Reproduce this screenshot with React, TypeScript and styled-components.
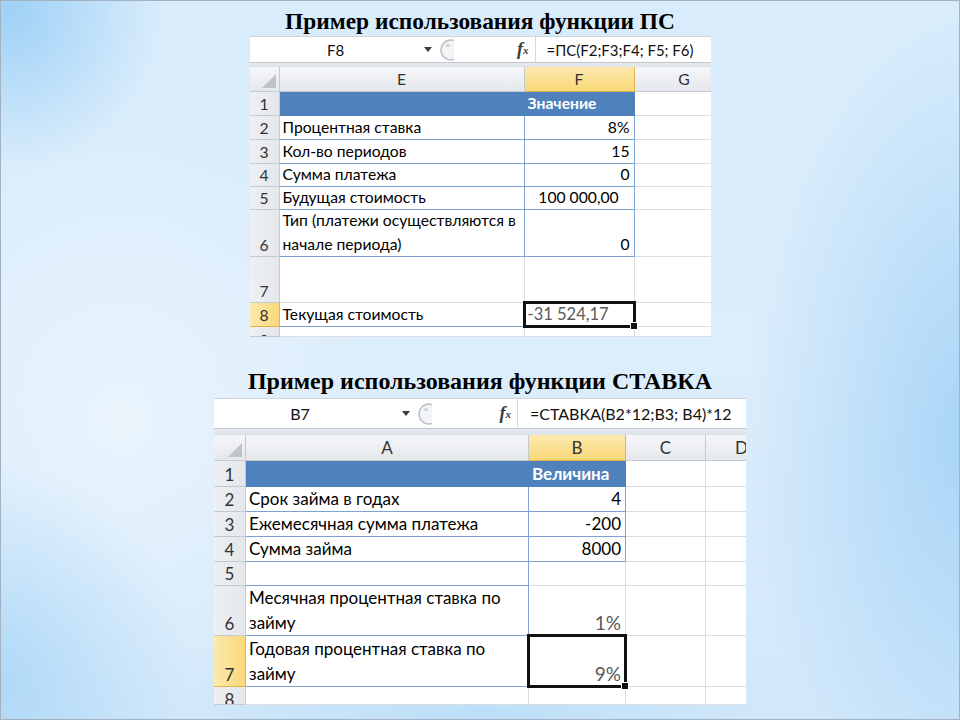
import React from 'react';
import styled, { createGlobalStyle, css } from 'styled-components';

const GlobalStyle = createGlobalStyle`
  html, body { margin: 0; padding: 0; }
  body { width: 960px; height: 720px; overflow: hidden; font-family: "Liberation Serif", serif; }
`;

const Slide = styled.div`
  width: 960px;
  height: 720px;
  box-sizing: border-box;
  border: 1px solid #a3b2c0;
  display: flex;
  flex-direction: column;
  align-items: center;
  background:
    radial-gradient(150px 160px at 10px 10px, rgba(140, 200, 245, 0.75), rgba(140, 200, 245, 0)),
    radial-gradient(230px 420px at 975px 430px, rgba(145, 202, 245, 0.7), rgba(145, 202, 245, 0)),
    radial-gradient(200px 220px at -10px 680px, rgba(150, 205, 245, 0.6), rgba(150, 205, 245, 0)),
    radial-gradient(300px 200px at 480px 730px, rgba(160, 210, 246, 0.45), rgba(160, 210, 246, 0)),
    radial-gradient(260px 300px at 120px 420px, rgba(235, 245, 253, 0.9), rgba(235, 245, 253, 0)),
    linear-gradient(180deg, #d8ecfb 0%, #dcedfb 50%, #d2e8fa 100%);
`;

const Title = styled.h1<{ $mt: number; $mb: number; $fs: number }>`
  margin: ${(p) => p.$mt}px 0 ${(p) => p.$mb}px;
  font-family: "Liberation Serif", "Times New Roman", serif;
  font-weight: bold;
  font-size: ${(p) => p.$fs}px;
  line-height: 26px;
  color: #000;
  white-space: nowrap;
`;

/* ---------- spreadsheet ---------- */

const SheetFrame = styled.div<{ $w: number; $fs: number }>`
  width: ${(p) => p.$w}px;
  overflow: hidden;
  background: #fff;
  font-family: "Lato", "Open Sans", sans-serif;
  font-size: ${(p) => p.$fs}px;
  color: #000;
`;

const FormulaBar = styled.div<{ $h: number; $fs: number }>`
  height: ${(p) => p.$h}px;
  box-sizing: border-box;
  display: flex;
  align-items: center;
  background: #fff;
  border-top: 1px solid #cfd4da;
  border-bottom: 1px solid #bfc6ce;
  white-space: nowrap;
  font-size: ${(p) => p.$fs}px;
`;

const NameText = styled.div`
  flex: none;
  width: 172px;
  text-align: center;
  color: #111;
`;

const ArrowBox = styled.div<{ $ml: number }>`
  flex: none;
  margin-left: ${(p) => p.$ml}px;
  width: 12px;
  display: flex;
  justify-content: center;
  align-items: center;
`;

const GripBox = styled.div`
  flex: none;
  width: 24px;
  display: flex;
  justify-content: flex-start;
  align-items: center;
`;

const FxCell = styled.div<{ $w: number }>`
  flex: none;
  width: ${(p) => p.$w}px;
  align-self: stretch;
  box-sizing: border-box;
  display: flex;
  align-items: center;
  justify-content: flex-end;
  padding-right: 6px;
  border-right: 1px solid #d3d8de;
  font: italic bold 18px "Liberation Serif", serif;
  color: #3a3a3a;
  & sub {
    font-size: 11px;
    font-style: italic;
    vertical-align: -2px;
  }
`;

const FormulaText = styled.div<{ $pl: number }>`
  padding-left: ${(p) => p.$pl}px;
  color: #111;
`;

const BarGap = styled.div<{ $h: number }>`
  height: ${(p) => p.$h}px;
  background: linear-gradient(#e6eaef, #dde2e8);
`;

const Grid = styled.div<{ $cols: string; $rows: string }>`
  display: grid;
  grid-template-columns: ${(p) => p.$cols};
  grid-template-rows: ${(p) => p.$rows};
`;

const headBg = (sel?: boolean) =>
  sel ? 'linear-gradient(#fde9ad, #f9d879)' : 'linear-gradient(#f5f6f8, #e5e8ec)';
const headLine = (sel?: boolean) => (sel ? '#e2b54c' : '#c5cad0');

const ColHead = styled.div<{ $sel?: boolean }>`
  display: flex;
  align-items: center;
  justify-content: center;
  background: ${(p) => headBg(p.$sel)};
  border-right: 1px solid ${(p) => headLine(p.$sel)};
  border-bottom: 1px solid ${(p) => headLine(p.$sel)};
  color: #333;
  overflow: hidden;
`;

const Corner = styled.div`
  display: flex;
  align-items: flex-end;
  justify-content: flex-end;
  padding: 0 3px 3px 0;
  background: linear-gradient(#f5f6f8, #e5e8ec);
  border-right: 1px solid #c5cad0;
  border-bottom: 1px solid #c5cad0;
`;

const RowHead = styled.div<{ $sel?: boolean; $clip?: boolean }>`
  display: flex;
  justify-content: center;
  align-items: ${(p) => (p.$clip ? 'flex-start' : 'flex-end')};
  padding: ${(p) => (p.$clip ? '2px 0 0' : '0')};
  line-height: 22px;
  background: ${(p) => (p.$sel ? 'linear-gradient(90deg, #fde9ad, #f9d879)' : 'linear-gradient(90deg, #eef0f3, #e4e7eb)')};
  border-right: 1px solid ${(p) => headLine(p.$sel)};
  border-bottom: 1px solid ${(p) => headLine(p.$sel)};
  color: #333;
  overflow: hidden;
`;

type Edge = 'blue' | 'grid' | 'fill';
const edgeColor: Record<Edge, string> = {
  blue: '#7ea2d2',
  grid: '#dadde1',
  fill: '#4f81bd',
};

const Cell = styled.div<{
  $align: 'left' | 'right' | 'center';
  $fill?: boolean;
  $bold?: boolean;
  $r: Edge;
  $b: Edge;
  $sel?: boolean;
  $big?: boolean;
  $bigSize: number;
  $lh: number;
}>`
  position: relative;
  display: flex;
  align-items: flex-end;
  justify-content: ${(p) => (p.$align === 'left' ? 'flex-start' : p.$align === 'right' ? 'flex-end' : 'center')};
  padding: 0 4px 0 3px;
  white-space: pre;
  line-height: ${(p) => p.$lh}px;
  background: ${(p) => (p.$fill ? '#4f81bd' : '#fff')};
  color: ${(p) => (p.$fill ? '#fff' : p.$big ? '#5a5a5a' : '#000')};
  font-weight: ${(p) => (p.$bold ? 700 : 400)};
  font-size: ${(p) => (p.$big ? `${p.$bigSize}px` : '1em')};
  border-right: 1px solid ${(p) => edgeColor[p.$r]};
  border-bottom: 1px solid ${(p) => edgeColor[p.$b]};
  ${(p) =>
    p.$sel &&
    css`
      z-index: 1;
      &::after {
        content: '';
        position: absolute;
        inset: -2px -2px -2px -2px;
        border: 3px solid #111;
        pointer-events: none;
      }
      &::before {
        content: '';
        position: absolute;
        right: -4px;
        bottom: -4px;
        width: 6px;
        height: 6px;
        background: #111;
        border: 1px solid #fff;
        z-index: 2;
      }
    `}
`;

type CellSpec = {
  text?: string;
  align?: 'left' | 'right' | 'center';
  fill?: boolean;
  bold?: boolean;
  r?: Edge;
  b?: Edge;
  sel?: boolean;
  big?: boolean;
};

type RowSpec = { num: string; h: number; sel?: boolean; clip?: boolean; cells: CellSpec[] };
type ColSpec = { label: string; w: number; sel?: boolean };

type SheetProps = {
  width: number;
  fontSize: number;
  barFont: number;
  bigSize: number;
  lineHeight: number;
  barHeight: number;
  gapHeight: number;
  headHeight: number;
  rowHeadWidth: number;
  nameBox: string;
  arrowMargin: number;
  fxWidth: number;
  formulaPad: number;
  formula: string;
  cols: ColSpec[];
  rows: RowSpec[];
};

const DropArrow = () => (
  <svg width="8" height="5" viewBox="0 0 8 5">
    <polygon points="0,0 8,0 4,5" fill="#3c3c3c" />
  </svg>
);

const Grip = () => (
  <svg width="20" height="24" viewBox="0 0 20 24">
    <circle cx="17" cy="12" r="10" fill="#f3f4f6" stroke="#b9c0c8" strokeWidth="1.5" />
    <ellipse cx="14" cy="7.5" rx="2.6" ry="1.6" fill="#d2d7dd" />
  </svg>
);

const CornerMark = () => (
  <svg width="14" height="14" viewBox="0 0 14 14">
    <polygon points="14,0 14,14 0,14" fill="#bfc4ca" />
  </svg>
);

const Sheet: React.FC<SheetProps> = (p) => {
  const cols = `${p.rowHeadWidth}px ${p.cols.map((c) => `${c.w}px`).join(' ')}`;
  const rows = `${p.headHeight}px ${p.rows.map((r) => `${r.h}px`).join(' ')}`;
  return (
    <SheetFrame $w={p.width} $fs={p.fontSize}>
      <FormulaBar $h={p.barHeight} $fs={p.barFont}>
        <NameText>{p.nameBox}</NameText>
        <ArrowBox $ml={p.arrowMargin}>
          <DropArrow />
        </ArrowBox>
        <GripBox>
          <Grip />
        </GripBox>
        <FxCell $w={p.fxWidth}>
          f<sub>x</sub>
        </FxCell>
        <FormulaText $pl={p.formulaPad}>{p.formula}</FormulaText>
      </FormulaBar>
      <BarGap $h={p.gapHeight} />
      <Grid $cols={cols} $rows={rows}>
        <Corner>
          <CornerMark />
        </Corner>
        {p.cols.map((c) => (
          <ColHead key={c.label} $sel={c.sel}>
            {c.label}
          </ColHead>
        ))}
        {p.rows.map((r) => (
          <React.Fragment key={r.num}>
            <RowHead $sel={r.sel} $clip={r.clip}>
              {r.num}
            </RowHead>
            {p.cols.map((c, i) => {
              const s = r.cells[i] || {};
              return (
                <Cell
                  key={c.label}
                  $align={s.align || 'left'}
                  $fill={s.fill}
                  $bold={s.bold}
                  $r={s.r || 'grid'}
                  $b={s.b || 'grid'}
                  $sel={s.sel}
                  $big={s.big}
                  $bigSize={p.bigSize}
                  $lh={p.lineHeight}
                >
                  {s.text}
                </Cell>
              );
            })}
          </React.Fragment>
        ))}
      </Grid>
    </SheetFrame>
  );
};

const B = (text: string, align: 'left' | 'right' | 'center' = 'left'): CellSpec => ({
  text,
  align,
  r: 'blue',
  b: 'blue',
});

const pvRows: RowSpec[] = [
  {
    num: '1',
    h: 24,
    cells: [
      { fill: true, r: 'fill', b: 'fill' },
      { fill: true, bold: true, text: 'Значение', r: 'fill', b: 'fill' },
    ],
  },
  { num: '2', h: 24, cells: [B('Процентная ставка'), B('8%', 'right')] },
  { num: '3', h: 24, cells: [B('Кол-во периодов'), B('15', 'right')] },
  { num: '4', h: 23, cells: [B('Сумма платежа'), B('0', 'right')] },
  { num: '5', h: 23, cells: [B('Будущая стоимость'), B('100 000,00', 'center')] },
  { num: '6', h: 47, cells: [B('Тип (платежи осуществляются в\nначале периода)'), B('0', 'right')] },
  { num: '7', h: 46, cells: [] },
  {
    num: '8',
    h: 24,
    sel: true,
    cells: [
      { text: 'Текущая стоимость', b: 'blue' },
      { text: '-31 524,17', sel: true, big: true },
    ],
  },
  { num: '9', h: 10, clip: true, cells: [] },
];

const rateRows: RowSpec[] = [
  {
    num: '1',
    h: 26,
    cells: [
      { fill: true, r: 'fill', b: 'fill' },
      { fill: true, bold: true, text: 'Величина', r: 'fill', b: 'fill' },
    ],
  },
  { num: '2', h: 25, cells: [B('Срок займа в годах'), B('4', 'right')] },
  { num: '3', h: 25, cells: [B('Ежемесячная сумма платежа'), B('-200', 'right')] },
  { num: '4', h: 25, cells: [B('Сумма займа'), B('8000', 'right')] },
  { num: '5', h: 24, cells: [{ r: 'blue', b: 'blue' }] },
  {
    num: '6',
    h: 50,
    cells: [B('Месячная процентная ставка по\nзайму'), { text: '1%', align: 'right', big: true }],
  },
  {
    num: '7',
    h: 51,
    sel: true,
    cells: [B('Годовая процентная ставка по\nзайму'), { text: '9%', align: 'right', big: true, sel: true }],
  },
  { num: '8', h: 18, clip: true, cells: [] },
];

export default function App() {
  return (
    <>
      <GlobalStyle />
      <Slide>
        <Title $mt={7} $mb={2} $fs={23.4}>Пример использования функции ПС</Title>
        <Sheet
          width={461}
          fontSize={15.7}
          barFont={15}
          bigSize={16.5}
          lineHeight={24}
          barHeight={27}
          gapHeight={4}
          headHeight={25}
          rowHeadWidth={30}
          nameBox="F8"
          arrowMargin={0}
          fxWidth={78}
          formulaPad={11}
          formula="=ПС(F2;F3;F4; F5; F6)"
          cols={[
            { label: 'E', w: 245 },
            { label: 'F', w: 110, sel: true },
            { label: 'G', w: 100 },
          ]}
          rows={pvRows}
        />
        <Title $mt={31} $mb={4} $fs={24}>Пример использования функции СТАВКА</Title>
        <Sheet
          width={532}
          fontSize={17}
          barFont={16}
          bigSize={19}
          lineHeight={25}
          barHeight={31}
          gapHeight={6}
          headHeight={26}
          rowHeadWidth={32}
          nameBox="B7"
          arrowMargin={14}
          fxWidth={82}
          formulaPad={12}
          formula="=СТАВКА(B2*12;B3; B4)*12"
          cols={[
            { label: 'A', w: 283 },
            { label: 'B', w: 97, sel: true },
            { label: 'C', w: 80 },
            { label: 'D', w: 72 },
          ]}
          rows={rateRows}
        />
      </Slide>
    </>
  );
}
